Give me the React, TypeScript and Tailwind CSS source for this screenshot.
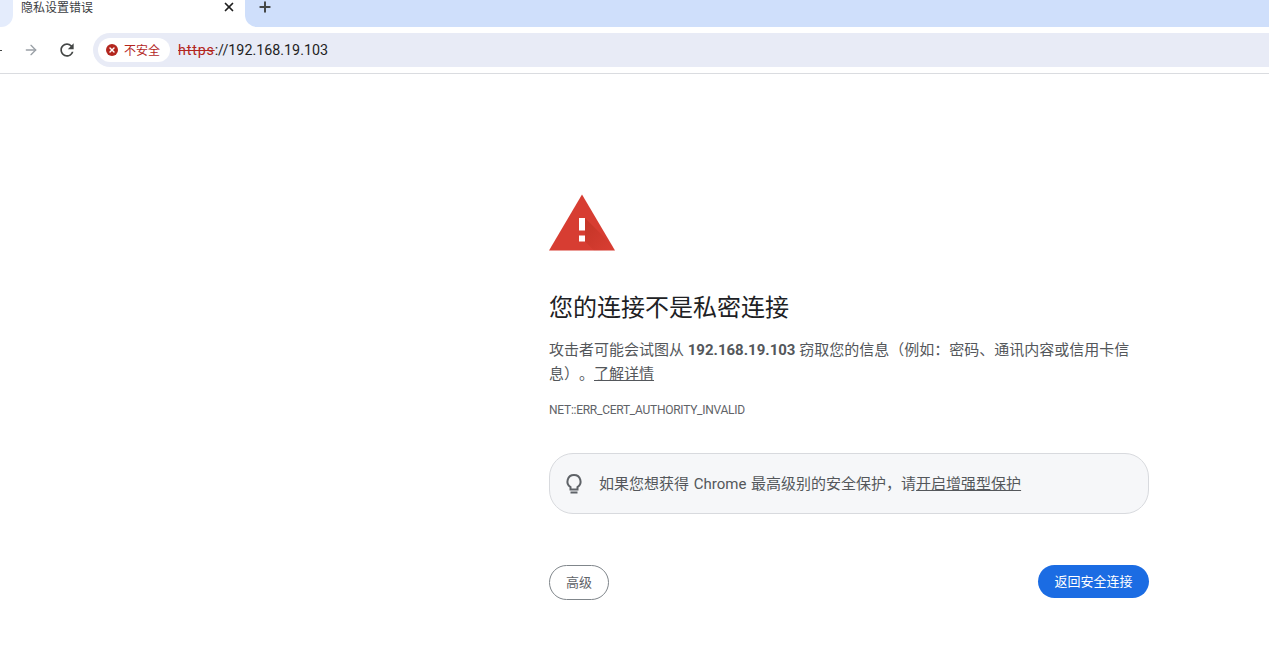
import { ArrowRight, Plus, X } from 'lucide-react';

const fontStack = { fontFamily: 'Roboto, "Noto Sans CJK SC", sans-serif' };

function WarningIcon() {
  return (
    <svg width="66" height="57" viewBox="0 0 66 57" className="block">
      <defs>
        <linearGradient id="warnShade" x1="0.1" y1="0.1" x2="0.9" y2="0.9">
          <stop offset="0" stopColor="#a52714" stopOpacity="0.35" />
          <stop offset="1" stopColor="#a52714" stopOpacity="0" />
        </linearGradient>
      </defs>
      <path d="M33 0.5L66 56.5H0Z" fill="#d73d32" />
      <path d="M36 24L63 51L66 56.5H45L36 47.5Z" fill="url(#warnShade)" />
      <rect x="30" y="24" width="6" height="12.5" fill="#fff" />
      <rect x="30" y="41.5" width="6" height="6" fill="#fff" />
    </svg>
  );
}

function ReloadIcon() {
  return (
    <svg width="20" height="20" viewBox="0 0 24 24" fill="#444746">
      <path d="M17.65 6.35A7.958 7.958 0 0 0 12 4c-4.42 0-7.99 3.58-7.99 8s3.57 8 7.99 8c3.73 0 6.84-2.55 7.73-6h-2.08A5.99 5.99 0 0 1 12 18c-3.31 0-6-2.69-6-6s2.69-6 6-6c1.66 0 3.14.69 4.22 1.78L13 11h7V4l-2.35 2.35z" />
    </svg>
  );
}

function BulbIcon() {
  return (
    <svg width="20" height="22" viewBox="0 0 20 22" fill="none" stroke="#5f6368" strokeWidth="2">
      <path d="M10 2a6.5 6.5 0 0 0-3.5 12v2.5h7V14A6.5 6.5 0 0 0 10 2Z" />
      <path d="M6.5 19.5h7" />
    </svg>
  );
}

export default function App() {
  return (
    <div className="h-[667px] w-[1269px] overflow-hidden bg-white font-['Noto_Sans_CJK_SC',sans-serif]">
      {/* Tab strip */}
      <div className="flex h-[27px] bg-white">
        <div className="h-full w-[13px] rounded-br-xl bg-[#e4ecfc]" />
        <div className="flex h-full w-[232px] items-start bg-white pl-2 pr-[9px]">
          <span className="flex-1 text-xs leading-[14px] text-[#3c4043]">隐私设置错误</span>
          <X className="h-3.5 w-3.5 text-[#1f1f1f]" strokeWidth={3} />
        </div>
        <div className="flex-1 rounded-bl-xl bg-[#cfdffb] pl-3">
          <Plus className="mt-[-1px] h-4 w-4 text-[#444746]" strokeWidth={3} />
        </div>
      </div>

      {/* Toolbar */}
      <div className="flex h-[47px] items-center border-b border-[#dadce0] bg-white">
        <div className="h-px w-[2px] bg-[#444746]" />
        <ArrowRight className="ml-[21px] h-4 w-4 text-[#9aa0a6]" strokeWidth={2} />
        <div className="ml-[18px]">
          <ReloadIcon />
        </div>
        <div className="ml-[16px] flex h-[34px] flex-1 items-center rounded-l-full bg-[#e8ebf6] pl-[5px]">
          <div className="flex h-6 w-[72px] items-center rounded-full bg-white pl-2">
            <span className="flex h-3 w-3 items-center justify-center rounded-full bg-[#b3261e]">
              <X className="h-2 w-2 text-white" strokeWidth={4} />
            </span>
            <span className="ml-1.5 text-xs leading-none text-[#b3261e]">不安全</span>
          </div>
          <span className="ml-2 mt-0.5 text-[14.3px] font-['Roboto',sans-serif] text-[#1f1f1f]">
            <span className="tracking-[0.8px] text-[#b3261e] line-through">https</span>://192.168.19.103
          </span>
        </div>
      </div>

      {/* Interstitial content */}
      <main className="ml-[549px] w-[600px] pt-[120px]" style={fontStack}>
        <WarningIcon />
        <h1 className="mt-10 text-2xl leading-[34px] font-normal text-[#202124]">您的连接不是私密连接</h1>
        <p className="mt-[13px] text-[15px] leading-6 text-[#54575b] [text-spacing-trim:space-all]">
          攻击者可能会试图从 <strong className="font-bold">192.168.19.103</strong> 窃取您的信息（例如：密码、通讯内容或信用卡信息）。
          <a className="underline">了解详情</a>
        </p>
        <div className="mt-[14px] text-xs leading-5 tracking-[-0.26px] text-[#5f6368]">NET::ERR_CERT_AUTHORITY_INVALID</div>
        <div className="mt-[33px] flex h-[61px] items-center rounded-[24px] border border-[#d8dade] bg-[#f6f7f9] pl-[14px]">
          <BulbIcon />
          <span className="ml-[15px] mt-0.5 text-[15px] text-[#54575b] [word-spacing:1px]">
            如果您想获得 Chrome 最高级别的安全保护，请<a className="underline">开启增强型保护</a>
          </span>
        </div>
        <div className="mt-[51px] flex items-start justify-between">
          <button className="h-[35px] w-[60px] rounded-full border border-[#80868b] bg-white text-[13px] text-[#5f6368]">
            高级
          </button>
          <button className="h-[33px] w-[111px] rounded-full bg-[#1b6ce3] text-[13px] text-white">
            返回安全连接
          </button>
        </div>
      </main>
    </div>
  );
}
